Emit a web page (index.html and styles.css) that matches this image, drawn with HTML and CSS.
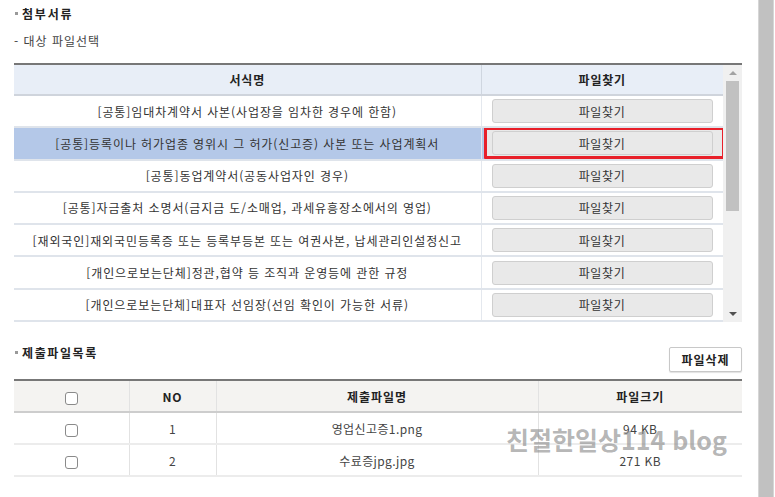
FILE: index.html
```html
<!DOCTYPE html>
<html lang="ko">
<head>
  <meta charset="UTF-8">
  <meta name="viewport" content="width=device-width, initial-scale=1.0">
  <title>첨부서류</title>
  <link rel="stylesheet" href="styles.css">
</head>
<body>
  <div class="page">
    <div class="content">
      <!-- 첨부서류 -->
      <h3 class="sec-title">첨부서류</h3>
      <p class="sub-text">- 대상 파일선택</p>

      <div class="form-box">
        <table class="form-table">
          <colgroup>
            <col class="col-name">
            <col class="col-btn">
          </colgroup>
          <thead>
            <tr>
              <th>서식명</th>
              <th>파일찾기</th>
            </tr>
          </thead>
          <tbody>
            <tr>
              <td>[공통]임대차계약서 사본(사업장을 임차한 경우에 한함)</td>
              <td><button class="find-btn">파일찾기</button></td>
            </tr>
            <tr class="selected">
              <td>[공통]등록이나 허가업종 영위시 그 허가(신고증) 사본 또는 사업계획서</td>
              <td><span class="red-box"><button class="find-btn">파일찾기</button></span></td>
            </tr>
            <tr>
              <td>[공통]동업계약서(공동사업자인 경우)</td>
              <td><button class="find-btn">파일찾기</button></td>
            </tr>
            <tr>
              <td>[공통]자금출처 소명서(금지금 도/소매업, 과세유흥장소에서의 영업)</td>
              <td><button class="find-btn">파일찾기</button></td>
            </tr>
            <tr>
              <td>[재외국인]재외국민등록증 또는 등록부등본 또는 여권사본, 납세관리인설정신고</td>
              <td><button class="find-btn">파일찾기</button></td>
            </tr>
            <tr>
              <td>[개인으로보는단체]정관,협약 등 조직과 운영등에 관한 규정</td>
              <td><button class="find-btn">파일찾기</button></td>
            </tr>
            <tr>
              <td>[개인으로보는단체]대표자 선임장(선임 확인이 가능한 서류)</td>
              <td><button class="find-btn">파일찾기</button></td>
            </tr>
          </tbody>
        </table>

        <!-- scrollbar -->
        <div class="scrollbar">
          <span class="arrow arrow-up"></span>
          <div class="track">
            <div class="thumb"></div>
          </div>
          <span class="arrow arrow-down"></span>
        </div>
      </div>

      <!-- 제출파일목록 -->
      <div class="list-head">
        <h3 class="sec-title">제출파일목록</h3>
        <button class="del-btn">파일삭제</button>
      </div>

      <div class="list-box">
        <table class="list-table">
          <colgroup>
            <col class="col-chk">
            <col class="col-no">
            <col class="col-file">
            <col class="col-size">
          </colgroup>
          <thead>
            <tr>
              <th><span class="chk"></span></th>
              <th>NO</th>
              <th>제출파일명</th>
              <th>파일크기</th>
            </tr>
          </thead>
          <tbody>
            <tr>
              <td><span class="chk"></span></td>
              <td>1</td>
              <td>영업신고증1.png</td>
              <td>94 KB</td>
            </tr>
            <tr>
              <td><span class="chk"></span></td>
              <td>2</td>
              <td>수료증jpg.jpg</td>
              <td>271 KB</td>
            </tr>
          </tbody>
        </table>
        <div class="watermark">친절한일상114 blog</div>
      </div>
    </div>

    <div class="page-bar"></div>
  </div>
</body>
</html>
```

FILE: styles.css
```css
body {
  margin: 0;
  font-family: "Noto Sans CJK KR", "Noto Sans", sans-serif;
  font-size: 12px;
  color: #333;
  background: #fff;
}
.page {
  display: flex;
  height: 497px;
  overflow: hidden;
}
.content {
  width: 728px;
  padding: 6px 0 0 14px;
}
.page-bar {
  width: 14px;
  margin-left: 16px;
  background: #c1c1c1;
  border-left: 1px solid #d6d6d6;
  border-right: 1px solid #d6d6d6;
}

.sec-title {
  position: relative;
  margin: 0;
  padding-left: 8px;
  font-size: 12px;
  line-height: 16px;
  font-weight: bold;
  color: #222;
  letter-spacing: 1.8px;
}
.sec-title::before {
  content: "";
  position: absolute;
  left: 1px;
  top: 6px;
  width: 3px;
  height: 3px;
  background: #999;
}
.sub-text {
  margin: 11px 0 0 0;
  line-height: 16px;
  color: #444;
  letter-spacing: 1px;
}

/* 서식 테이블 */
.form-box {
  display: flex;
  margin-top: 14px;
  border-top: 2px solid #777;
}
.form-table {
  width: 709px;
  border-collapse: collapse;
  table-layout: fixed;
}
.col-name { width: 467px; }
.col-btn { width: 242px; }
.form-table th {
  height: 29px;
  padding: 0;
  background: #e8eef7;
  border-bottom: 2px solid #cfd4dc;
  font-weight: bold;
  color: #222;
  letter-spacing: 0.8px;
}
.form-table th + th {
  border-left: 1px solid #cfd6e0;
}
.form-table td {
  height: 30px;
  padding: 0;
  text-align: center;
  border-bottom: 2px solid #dfe4eb;
  white-space: nowrap;
  letter-spacing: 0.9px;
}
.form-table td + td {
  border-left: 1px solid #e4e8ee;
  padding-left: 10px;
  padding-right: 9px;
  text-align: left;
}
.form-table tr.selected td {
  background: #b4c8e8;
}
.find-btn {
  display: block;
  width: 221px;
  height: 24px;
  padding: 0;
  background: #e9e9e9;
  border: 1px solid #cfcfcf;
  border-radius: 3px;
  font-family: inherit;
  font-size: 12px;
  color: #333;
  letter-spacing: 0.6px;
  cursor: pointer;
}
.red-box {
  display: block;
  width: 227px;
  margin: -1px 0 -1px -8px;
  padding: 1px 3px 1px 5px;
  border: 3px solid #e8202a;
  border-radius: 1px;
  background: #e9e9e9;
}

/* 스크롤바 */
.scrollbar {
  width: 19px;
  display: flex;
  flex-direction: column;
  align-items: center;
  background: #f0f0f0;
  height: 257px;
}
.track {
  flex: 1;
  width: 13px;
}
.thumb {
  height: 130px;
  background: #c1c1c1;
}
.arrow {
  display: block;
  width: 0;
  height: 0;
  margin: 6px 0;
  border-left: 4px solid transparent;
  border-right: 4px solid transparent;
}
.arrow-up {
  border-bottom: 4px solid #a3a3a3;
}
.arrow-down {
  border-top: 4px solid #505050;
}

/* 제출파일목록 */
.list-head {
  display: flex;
  justify-content: space-between;
  align-items: flex-start;
  margin-top: 25px;
}
.list-head .sec-title {
  margin-top: -2px;
  letter-spacing: 1.6px;
}
.del-btn {
  width: 73px;
  height: 25px;
  padding: 0;
  background: #fff;
  border: 1px solid #c8c8c8;
  border-radius: 2px;
  box-shadow: 0 1px 1px rgba(0, 0, 0, 0.12);
  font-family: inherit;
  font-size: 12px;
  font-weight: bold;
  color: #222;
  letter-spacing: 1px;
}

.list-box {
  position: relative;
  margin-top: 7px;
}
.list-table {
  width: 728px;
  border-collapse: collapse;
  table-layout: fixed;
  border-top: 2px solid #777;
}
.col-chk { width: 115px; }
.col-no { width: 87px; }
.col-file { width: 322px; }
.col-size { width: 204px; }
.list-table th {
  height: 30px;
  padding: 0;
  background: #f4f3f1;
  border-bottom: 2px solid #cdcdcd;
  font-weight: bold;
  color: #222;
  letter-spacing: 1px;
}
.list-table th + th,
.list-table td + td {
  border-left: 1px solid #e2e2e2;
}
.list-table td {
  height: 30px;
  padding: 0;
  text-align: center;
  border-bottom: 2px solid #ececec;
  color: #444;
  letter-spacing: 0.4px;
}
.chk {
  display: inline-block;
  width: 11px;
  height: 11px;
  border: 1px solid #8a8a8a;
  border-radius: 3px;
  background: #fff;
  vertical-align: middle;
}
.watermark {
  position: absolute;
  left: 492px;
  top: 43px;
  font-family: "Noto Sans CJK KR", sans-serif;
  font-size: 25px;
  font-weight: bold;
  line-height: 34px;
  color: rgba(140, 140, 140, 0.65);
  white-space: nowrap;
}
```
